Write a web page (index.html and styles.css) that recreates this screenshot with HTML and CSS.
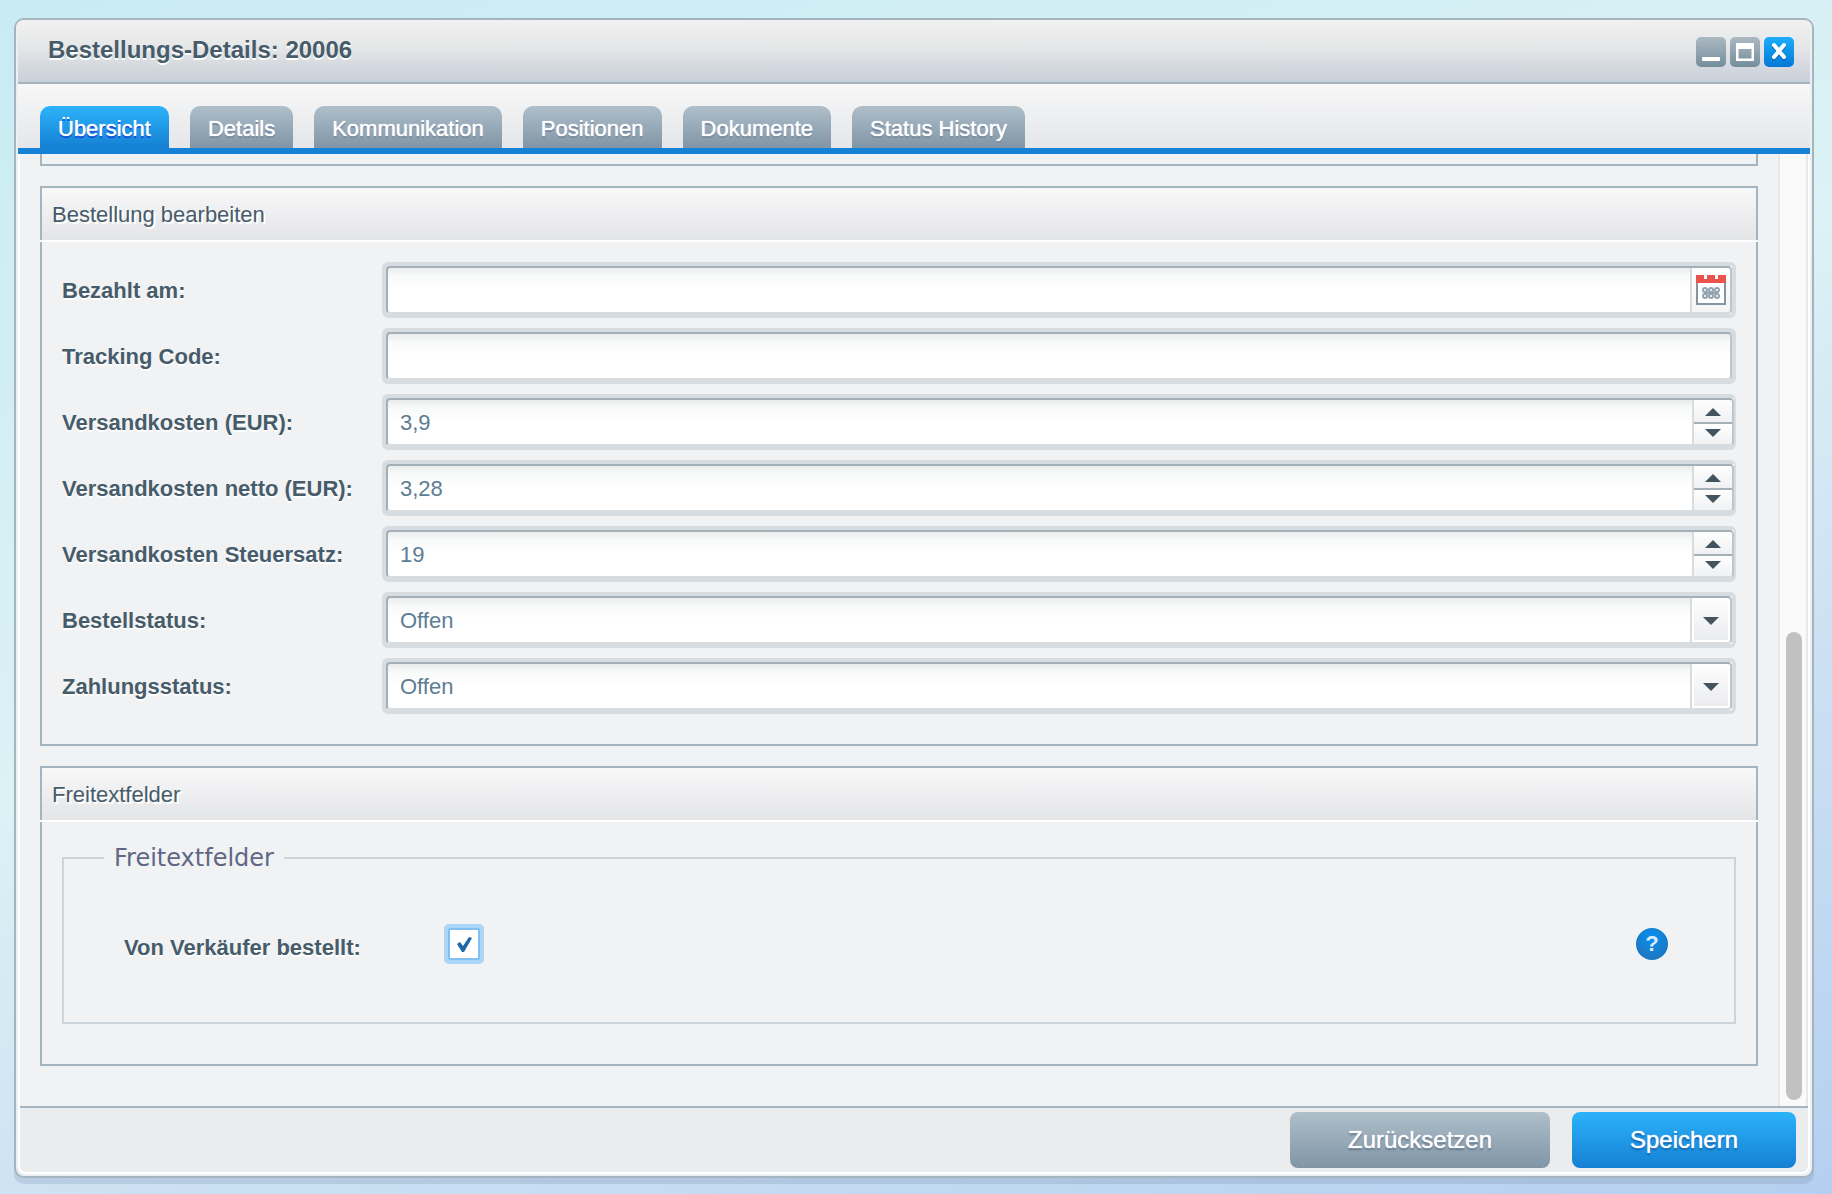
FILE: index.html
```html
<!DOCTYPE html>
<html lang="de">
<head>
<meta charset="utf-8">
<title>Bestellungs-Details: 20006</title>
<link rel="stylesheet" href="styles.css">
</head>
<body>
<main class="window">
  <header class="titlebar">
    <h1 class="title">Bestellungs-Details: 20006</h1>
    <div class="tools">
      <button class="tool" type="button" aria-label="Minimieren">
        <svg viewBox="0 0 30 30"><rect x="6" y="20" width="18" height="4" rx="1" fill="#fff"/></svg>
      </button>
      <button class="tool" type="button" aria-label="Maximieren">
        <svg viewBox="0 0 30 30"><path fill="#fff" fill-rule="evenodd" d="M6 6h18v18H6zM8.500 12v9.500h13V12z"/></svg>
      </button>
      <button class="tool tool-close" type="button" aria-label="Schließen">
        <svg viewBox="0 0 30 30"><path d="M10 10l10 12M20 10L10 22" stroke="#0b5fb0" stroke-width="4" stroke-linecap="round" opacity=".5"/><path d="M10 8l10 12M20 8L10 20" stroke="#fff" stroke-width="4" stroke-linecap="round"/></svg>
      </button>
    </div>
  </header>
  <nav class="tabs">
    <button class="tab tab-active" type="button">Übersicht</button>
    <button class="tab" type="button">Details</button>
    <button class="tab" type="button">Kommunikation</button>
    <button class="tab" type="button">Positionen</button>
    <button class="tab" type="button">Dokumente</button>
    <button class="tab" type="button">Status History</button>
  </nav>
  <div class="frame">
    <div class="scroller">
      <div class="content">
        <div class="panel panel-tail"></div>
        <section class="panel">
          <h2 class="panel-title">Bestellung bearbeiten</h2>
          <form class="form">
            <div class="row">
              <label class="label" for="paid">Bezahlt am:</label>
              <div class="field">
                <input class="input" id="paid" type="text">
                <button class="trigger" type="button" aria-label="Kalender">
                  <svg class="calendar" viewBox="0 0 30 30">
                    <path d="M1 8v21h28V8" fill="#fff" stroke="#8496a3" stroke-width="2"/>
                    <path d="M0 0h8v4h3V0h8v4h3V0h8v8H0z" fill="#e9534c"/>
                    <g fill="#fff" stroke="#93a4b0" stroke-width="2"><circle cx="9" cy="15" r="2"/><circle cx="15" cy="15" r="2"/><circle cx="21" cy="15" r="2"/><circle cx="9" cy="21" r="2"/><circle cx="15" cy="21" r="2"/><circle cx="21" cy="21" r="2"/></g>
                    <path d="M8 18h14" stroke="#93a4b0" stroke-width="2"/>
                  </svg>
                </button>
              </div>
            </div>
            <div class="row">
              <label class="label" for="tracking">Tracking Code:</label>
              <div class="field"><input class="input" id="tracking" type="text"></div>
            </div>
            <div class="row">
              <label class="label" for="cost">Versandkosten (EUR):</label>
              <div class="field field-spin">
                <input class="input" id="cost" type="text" inputmode="decimal" value="3,9">
                <div class="spinner">
                  <button class="spin" type="button" aria-label="Erhöhen"><svg class="arrow" viewBox="0 0 16 8"><path d="M8 0l8 8H0z"/></svg></button>
                  <button class="spin" type="button" aria-label="Verringern"><svg class="arrow" viewBox="0 0 16 8"><path d="M0 0h16L8 8z"/></svg></button>
                </div>
              </div>
            </div>
            <div class="row">
              <label class="label" for="net">Versandkosten netto (EUR):</label>
              <div class="field field-spin">
                <input class="input" id="net" type="text" inputmode="decimal" value="3,28">
                <div class="spinner">
                  <button class="spin" type="button" aria-label="Erhöhen"><svg class="arrow" viewBox="0 0 16 8"><path d="M8 0l8 8H0z"/></svg></button>
                  <button class="spin" type="button" aria-label="Verringern"><svg class="arrow" viewBox="0 0 16 8"><path d="M0 0h16L8 8z"/></svg></button>
                </div>
              </div>
            </div>
            <div class="row">
              <label class="label" for="tax">Versandkosten Steuersatz:</label>
              <div class="field field-spin">
                <input class="input" id="tax" type="text" inputmode="decimal" value="19">
                <div class="spinner">
                  <button class="spin" type="button" aria-label="Erhöhen"><svg class="arrow" viewBox="0 0 16 8"><path d="M8 0l8 8H0z"/></svg></button>
                  <button class="spin" type="button" aria-label="Verringern"><svg class="arrow" viewBox="0 0 16 8"><path d="M0 0h16L8 8z"/></svg></button>
                </div>
              </div>
            </div>
            <div class="row">
              <label class="label" for="order-status">Bestellstatus:</label>
              <div class="field">
                <select class="input" id="order-status"><option>Offen</option></select>
                <span class="trigger trigger-drop"><svg class="arrow" viewBox="0 0 16 8"><path d="M0 0h16L8 8z"/></svg></span>
              </div>
            </div>
            <div class="row">
              <label class="label" for="payment-status">Zahlungsstatus:</label>
              <div class="field">
                <select class="input" id="payment-status"><option>Offen</option></select>
                <span class="trigger trigger-drop"><svg class="arrow" viewBox="0 0 16 8"><path d="M0 0h16L8 8z"/></svg></span>
              </div>
            </div>
          </form>
        </section>
        <section class="panel">
          <h2 class="panel-title">Freitextfelder</h2>
          <div class="free">
            <fieldset class="fieldset">
              <legend class="legend">Freitextfelder</legend>
              <div class="free-row">
                <label class="label free-label" for="seller">Von Verkäufer bestellt:</label>
                <input class="check" id="seller" type="checkbox" checked>
                <button class="help" type="button" aria-label="Hilfe">?</button>
              </div>
            </fieldset>
          </div>
        </section>
      </div>
      <div class="track"><div class="thumb"></div></div>
    </div>
    <footer class="footer">
      <button class="button" type="button">Zurücksetzen</button>
      <button class="button button-primary" type="button">Speichern</button>
    </footer>
  </div>
</main>
</body>
</html>
```

FILE: styles.css
```css
*, *::before, *::after { box-sizing: border-box; }

body {
  margin: 0;
  min-height: 100vh;
  padding: 18px 18px 16px 14px;
  display: flex;
  font: 22px/26px "Liberation Sans", Arial, sans-serif;
  color: #475c6a;
  background: linear-gradient(162deg, #c9ebf4 0%, #dcf2f5 45%, #cbe1f3 70%, #b5cff0 100%);
}

button, input, select { font: inherit; margin: 0; border: 0; padding: 0; }

.window {
  flex: 1;
  min-width: 0;
  display: flex;
  flex-direction: column;
  border: 2px solid #a4b5c0;
  border-radius: 10px;
  background: #eceff4;
  box-shadow: 0 6px 0 rgba(120, 140, 170, .25);
  overflow: hidden;
}

.titlebar {
  height: 64px;
  padding: 0 16px 4px 30px;
  margin: 0 2px;
  display: flex;
  align-items: center;
  justify-content: space-between;
  background: linear-gradient(#f1f1f1, #e6e7e8 40%, #c6ced8);
  box-shadow: 0 -2px 0 #a4b5c0 inset, -2px 0 0 #eceff4, 2px 0 0 #eceff4;
}

.title {
  margin: 0;
  font-size: 24px;
  line-height: 28px;
  text-shadow: 0 2px 0 #fff;
}

.tools { display: flex; gap: 4px; padding-top: 4px; }

.tool {
  width: 30px;
  height: 30px;
  border-radius: 5px;
  background: linear-gradient(#abb9c3, #758d9b);
}

.tool svg { display: block; }
.tool-close { background: linear-gradient(#1cadfc, #0479d6); }

.tabs {
  height: 70px;
  margin: 0 2px;
  padding: 22px 22px 0;
  display: flex;
  gap: 21px;
  border-bottom: 6px solid #1582d6;
  background: linear-gradient(#f8f8f8, #e4e6e9);
}

.tab {
  height: 42px;
  padding: 3px 18px 0;
  border-radius: 10px 10px 0 0;
  color: #fff;
  background: linear-gradient(#afbfca, #8095a6);
  text-shadow: 0 0 1px #fff, 0 2px 0 #7688a0;
}

.tab-active {
  background: linear-gradient(#2cb3fa, #1580d3);
  text-shadow: 0 0 1px #fff, 0 2px 0 #1048dc;
}

.frame {
  flex: 1;
  display: flex;
  flex-direction: column;
  margin: 0 2px 2px;
  border: 2px solid #fff;
  border-top: 0;
  border-radius: 0 0 8px 8px;
  background: #ebecee;
}

.scroller {
  flex: 1;
  display: flex;
  background: #f0f2f4;
  border-bottom: 2px solid #a4b5c0;
}

.content {
  flex: 1;
  min-width: 0;
  padding: 0 20px;
  display: flex;
  flex-direction: column;
  gap: 20px;
}

.panel { border: 2px solid #a4b5c0; }
.panel-tail { height: 12px; border-top: 0; }

.panel-title {
  margin: 0 -2px;
  height: 54px;
  padding: 14px 12px 12px;
  font-size: 22px;
  font-weight: 400;
  background:
    linear-gradient(#fff, #fff) bottom / 100% 2px no-repeat,
    linear-gradient(#a4b5c0, #a4b5c0) left / 2px 100% no-repeat,
    linear-gradient(#a4b5c0, #a4b5c0) right / 2px 100% no-repeat,
    linear-gradient(#f8f8f9, #e3e4e6);
  text-shadow: 2px 2px 0 #fff;
}

.form {
  padding: 20px 20px 30px;
  display: flex;
  flex-direction: column;
  gap: 10px;
}

.row { display: flex; align-items: center; }

.label {
  width: 320px;
  padding-top: 2px;
  font-weight: 700;
  text-shadow: 0 2px 0 #fff;
}

.field {
  flex: 1;
  height: 56px;
  display: flex;
  border: 4px solid #d6dce0;
  border-radius: 6px;
  background: #d6dce0;
  position: relative;
}

.field::after {
  content: "";
  position: absolute;
  inset: 0;
  border: 2px solid;
  border-color: #a4b0b8 #bcc5cb #d6dce0 #a4b0b8;
  border-radius: 4px;
  pointer-events: none;
}

.input {
  flex: 1;
  min-width: 0;
  padding: 1px 14px 0;
  appearance: none;
  border-radius: 4px;
  color: #5c7d93;
  background: linear-gradient(#e6e9e9, #f8f9f9 20%, #fff 50%);
  outline: 0;
}

.trigger {
  width: 42px;
  padding: 0 4px 0 2px;
  display: flex;
  align-items: center;
  justify-content: center;
  border-left: 2px solid #d6dce0;
  background: linear-gradient(#fff, #f4f4f6);
  pointer-events: none;
}

.trigger-drop {
  padding-top: 2px;
  background: linear-gradient(#fff, #e9eaed);
  box-shadow: inset -4px -4px 0 #fff, inset 2px 2px 0 #fff;
}

.calendar { width: 30px; height: 30px; }
.arrow { width: 16px; height: 8px; fill: #44545f; }

.field-spin { border-right-width: 2px; }
.field-spin .input { border-radius: 4px 0 0 4px; }

.spinner {
  width: 42px;
  padding-bottom: 2px;
  display: flex;
  flex-direction: column;
  border-left: 2px solid #d6dce0;
}

.spin {
  height: 24px;
  padding: 4px 2px 0 0;
  display: flex;
  align-items: center;
  justify-content: center;
  background: linear-gradient(#fff, #f0f1f3);
}

.spin + .spin {
  height: 22px;
  padding: 0 2px 2px 0;
  border-top: 2px solid #a4b0b8;
}

.free { padding: 20px 20px 40px; }

.fieldset {
  margin: 0;
  padding: 50px 66px 58px 60px;
  border: 2px solid #cdd4d9;
}

.legend {
  margin-left: -20px;
  padding: 0 10px;
  font: 24px/32px "DejaVu Sans", Verdana, sans-serif;
  color: #5f6785;
}

.free-row { display: flex; align-items: center; }
.free-label { padding-top: 8px; }

.check {
  width: 40px;
  height: 40px;
  appearance: none;
  border: 4px solid #abd6f8;
  border-radius: 5px;
  background:
    url("data:image/svg+xml,%3Csvg xmlns='http://www.w3.org/2000/svg' viewBox='0 0 32 32'%3E%3Cpath d='M9 16l3-2 3 4 6-9 3 1-8 14h-2z' fill='%231d67aa'/%3E%3C/svg%3E") #fff;
  box-shadow: inset 0 0 0 2px #82c0f2;
}

.help {
  width: 32px;
  height: 32px;
  margin-left: auto;
  border-radius: 50%;
  color: #dcecf8;
  font-size: 22px;
  font-weight: 700;
  background: radial-gradient(circle at 50% 30%, #0a90f0, #1c78c4 70%);
}

.track {
  width: 30px;
  padding: 0 4px 6px 6px;
  display: flex;
  align-items: flex-end;
  border: solid #e8e8e8;
  border-width: 0 2px;
  background: #fafafa;
}

.thumb { width: 16px; height: 468px; border-radius: 8px; background: #c1c1c1; }

.footer {
  height: 64px;
  padding: 4px 12px;
  display: flex;
  justify-content: flex-end;
  gap: 22px;
}

.button {
  width: 260px;
  height: 56px;
  border-radius: 8px;
  font-size: 24px;
  color: #fff;
  background: linear-gradient(#afbfca, #8095a6);
  text-shadow: 0 0 1px #fff, 0 2px 2px #5c7386;
}

.button-primary {
  width: 224px;
  background: linear-gradient(#2cb3fa, #1580d3);
  text-shadow: 0 0 1px #fff, 0 2px 2px #0e5ca6;
}
```
